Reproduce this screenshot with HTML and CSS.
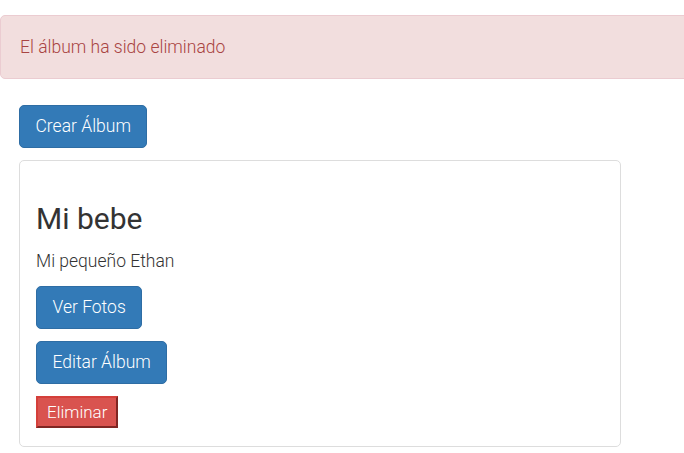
FILE: index.html
```html
<!DOCTYPE html>
<html lang="es">
<head>
<meta charset="utf-8">
<title>Álbumes</title>
<link rel="stylesheet" href="styles.css">
</head>
<body>
<div class="alert">El álbum ha sido eliminado</div>
<main class="container">
  <a class="btn btn-primary btn-create" href="#">Crear Álbum</a>
  <section class="card">
    <h3 class="card-title">Mi bebe</h3>
    <p class="card-text">Mi pequeño Ethan</p>
    <div class="actions">
      <a class="btn btn-primary" href="#">Ver Fotos</a>
      <a class="btn btn-primary" href="#">Editar Álbum</a>
      <button class="btn-danger" type="button">Eliminar</button>
    </div>
  </section>
</main>
</body>
</html>
```
FILE: styles.css
```css
* { box-sizing: border-box; }
html, body { margin: 0; padding: 0; }
body {
  font-family: Roboto, "Liberation Sans", sans-serif;
  font-weight: 300;
  font-size: 17.5px;
  line-height: 25px;
  color: #333;
  background: #fff;
  overflow: hidden;
}
.alert {
  margin: 15px -6px 0 0;
  padding: 19px;
  border: 1px solid #ebccd1;
  border-radius: 5px;
  background: #f2dede;
  color: #a94442;
  height: 64px;
  line-height: 24px;
}
.container {
  padding: 26px 63px 0 19px;
  display: flex;
  flex-direction: column;
  align-items: flex-start;
}
.btn {
  display: inline-block;
  text-decoration: none;
  font-size: 17.5px;
  line-height: 25px;
  height: 42.5px;
  padding: 7.5px 15.5px;
  border: 1px solid #2e6da4;
  border-radius: 5px;
  font-weight: 300;
}
.btn-primary { background: #337ab7; color: #fff; }
.card {
  align-self: stretch;
  margin-top: 12px;
  border: 1px solid #ddd;
  border-radius: 5px;
  padding: 16.5px 16px 17.5px;
}
.card-title {
  margin: 25px 0 0;
  font-size: 30px;
  font-weight: 400;
  line-height: 33px;
}
.card-text {
  margin: 14px 0 0;
  line-height: 25px;
}
.actions {
  margin-top: 12px;
  display: flex;
  flex-direction: column;
  align-items: flex-start;
  gap: 12.5px;
}
.btn-danger {
  font-family: inherit;
  font-weight: 300;
  font-size: 17px;
  line-height: 25px;
  height: 32px;
  padding: 1.5px 9px;
  margin: 0;
  background: #d9534f;
  color: #fff;
  border: 2.5px outset #d43f3a;
  border-radius: 0;
}
```
